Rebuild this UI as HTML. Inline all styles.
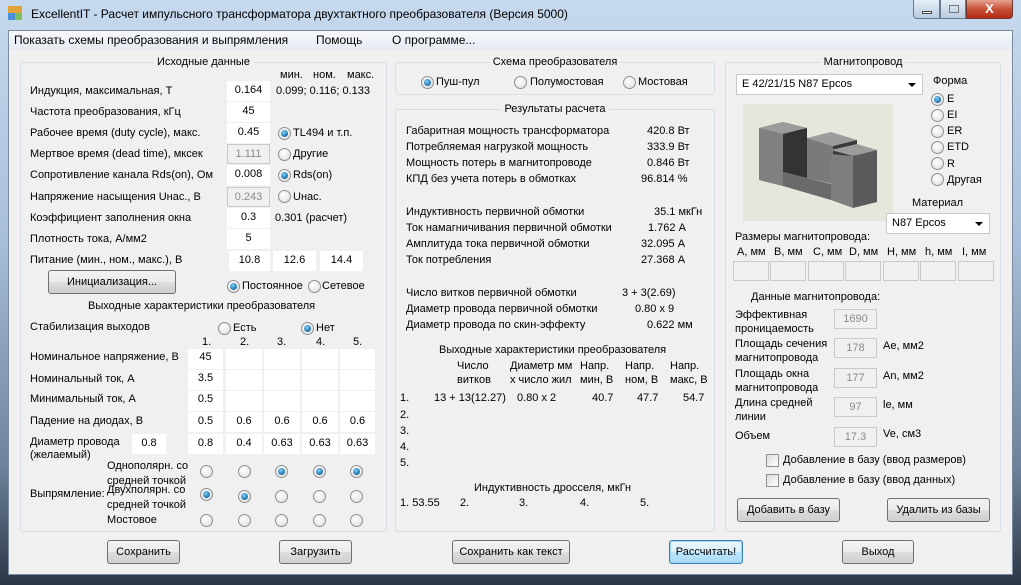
<!DOCTYPE html>
<html><head><meta charset="utf-8"><style>
*{margin:0;padding:0;box-sizing:border-box}
body{width:1021px;height:585px;overflow:hidden;position:relative;font-family:"Liberation Sans","DejaVu Sans",sans-serif;font-size:11px;color:#000;background:linear-gradient(180deg,#c6d9ee 0%,#a9c0da 40%,#6d829a 80%,#2b3645 100%)}
.a{position:absolute;white-space:nowrap}
.t{position:absolute;white-space:nowrap;line-height:14px}
.grp{position:absolute;border:1px solid #d5dfe5;border-radius:3px}
.gt{position:absolute;top:-8px;left:0;right:0;text-align:center;line-height:14px}
.gt span{background:#f0f0f0;padding:0 3px}
.in{position:absolute;background:#fff;height:20px;line-height:19px;text-align:center}
.dis{position:absolute;background:#f0f0f0;border:1px solid #c9c9c9;height:20px;line-height:18px;text-align:center;color:#8a8a8a}
.r{position:absolute;width:13px;height:13px;border-radius:50%;border:1px solid #8e8f8f;background:radial-gradient(circle at 40% 35%,#fff,#dcdcdc)}
.r.on::after{content:"";position:absolute;left:2px;top:2px;width:7px;height:7px;border-radius:50%;background:radial-gradient(circle at 40% 35%,#7fd0f5,#1b6fa8 70%,#0b3f6e)}
.b{position:absolute;height:24px;border:1px solid #707070;border-radius:3px;background:linear-gradient(#f2f2f2,#ebebeb 50%,#dddddd 51%,#cfcfcf);text-align:center;line-height:22px}
.cb{position:absolute;width:13px;height:13px;border:1px solid #8e8f8f;background:linear-gradient(135deg,#dcdcdc,#fff)}
.cmb{position:absolute;background:#fff;border:1px solid #c9c9c9;height:21px;line-height:19px;padding-left:5px}
.cmb::after{content:"";position:absolute;right:6px;top:8px;border-left:4px solid transparent;border-right:4px solid transparent;border-top:4px solid #000}
</style></head><body>
<div class="a" style="left:8px;top:6px;width:14px;height:14px;background:#e2a33a"><div style="position:absolute;left:0;bottom:0;width:7px;height:7px;background:#4a90d9"></div><div style="position:absolute;right:0;bottom:0;width:7px;height:7px;background:#7cc060"></div></div>
<div class="t" style="left:31px;top:7px;font-size:12px">ExcellentIT - Расчет импульсного трансформатора двухтактного преобразователя (Версия 5000)</div>
<div class="a" style="left:913px;top:0;width:27px;height:19px;border:1px solid #6a7a8c;border-top:none;border-radius:0 0 0 4px;background:linear-gradient(#e6eef7,#b9cbe0)"><div style="position:absolute;left:8px;top:11px;width:10px;height:3px;background:#fff;border:1px solid #444"></div></div>
<div class="a" style="left:940px;top:0;width:26px;height:19px;border:1px solid #6a7a8c;border-top:none;background:linear-gradient(#e6eef7,#b9cbe0)"><div style="position:absolute;left:8px;top:5px;width:10px;height:8px;border:1px solid #777"></div></div>
<div class="a" style="left:966px;top:0;width:47px;height:19px;border:1px solid #6a3a30;border-top:none;border-radius:0 0 4px 0;background:linear-gradient(#e8a493,#c75036 50%,#b52d14);color:#fff;font-weight:bold;text-align:center;line-height:17px;font-size:13px">X</div>
<div class="a" style="left:8px;top:30px;width:1005px;height:545px;background:#f0f0f0;border:1px solid #7a8ba0"></div>
<div class="a" style="left:9px;top:31px;width:1003px;height:19px;background:linear-gradient(#f6f8fb,#e5ebf3)"></div>
<div class="t" style="left:14px;top:33px;font-size:12px">Показать схемы преобразования и выпрямления</div>
<div class="t" style="left:316px;top:33px;font-size:12px">Помощь</div>
<div class="t" style="left:392px;top:33px;font-size:12px">О программе...</div>

<div class="grp" style="left:20px;top:62px;width:367px;height:470px"><div class="gt"><span>Исходные данные</span></div></div>
<div class="t" style="left:280px;top:68px">мин.</div><div class="t" style="left:313px;top:68px">ном.</div><div class="t" style="left:347px;top:68px">макс.</div>
<div class="t" style="left:30px;top:84px">Индукция, максимальная, Т</div>
<div class="t" style="left:30px;top:105px">Частота преобразования, кГц</div>
<div class="t" style="left:30px;top:126px">Рабочее время (duty cycle), макс.</div>
<div class="t" style="left:30px;top:147px">Мертвое время (dead time), мксек</div>
<div class="t" style="left:30px;top:168px">Сопротивление канала Rds(on), Ом</div>
<div class="t" style="left:30px;top:190px">Напряжение насыщения Uнас., В</div>
<div class="t" style="left:30px;top:211px">Коэффициент заполнения окна</div>
<div class="t" style="left:30px;top:232px">Плотность тока, А/мм2</div>
<div class="t" style="left:30px;top:253px">Питание (мин., ном., макс.), В</div>
<div class="in" style="left:227px;top:81px;width:43px">0.164</div>
<div class="in" style="left:227px;top:102px;width:43px">45</div>
<div class="in" style="left:227px;top:123px;width:43px">0.45</div>
<div class="dis" style="left:227px;top:144px;width:43px">1.111</div>
<div class="in" style="left:227px;top:165px;width:43px">0.008</div>
<div class="dis" style="left:227px;top:187px;width:43px">0.243</div>
<div class="in" style="left:227px;top:208px;width:43px">0.3</div>
<div class="in" style="left:227px;top:229px;width:43px">5</div>
<div class="in" style="left:229px;top:251px;width:41px">10.8</div>
<div class="in" style="left:273px;top:251px;width:43px">12.6</div>
<div class="in" style="left:320px;top:251px;width:43px">14.4</div>
<div class="t" style="left:276px;top:84px">0.099; 0.116; 0.133</div>
<div class="r on" style="left:278px;top:127px"></div><div class="t" style="left:293px;top:126px">TL494 и т.п.</div>
<div class="r" style="left:278px;top:148px"></div><div class="t" style="left:293px;top:147px">Другие</div>
<div class="r on" style="left:278px;top:169px"></div><div class="t" style="left:293px;top:168px">Rds(on)</div>
<div class="r" style="left:278px;top:190px"></div><div class="t" style="left:293px;top:190px">Uнас.</div>
<div class="t" style="left:275px;top:211px">0.301 (расчет)</div>
<div class="b" style="left:48px;top:270px;width:128px">Инициализация...</div>
<div class="r on" style="left:227px;top:280px"></div><div class="t" style="left:242px;top:279px">Постоянное</div>
<div class="r" style="left:308px;top:280px"></div><div class="t" style="left:322px;top:279px">Сетевое</div>
<div class="t" style="left:88px;top:299px">Выходные характеристики преобразователя</div>
<div class="t" style="left:30px;top:320px">Стабилизация выходов</div>
<div class="r" style="left:218px;top:322px"></div><div class="t" style="left:233px;top:321px">Есть</div>
<div class="r on" style="left:301px;top:322px"></div><div class="t" style="left:316px;top:321px">Нет</div>
<div class="t" style="left:202px;top:335px">1.</div><div class="t" style="left:240px;top:335px">2.</div><div class="t" style="left:277px;top:335px">3.</div><div class="t" style="left:316px;top:335px">4.</div><div class="t" style="left:353px;top:335px">5.</div>
<div class="t" style="left:30px;top:350px">Номинальное напряжение, В</div>
<div class="t" style="left:30px;top:372px">Номинальный ток, А</div>
<div class="t" style="left:30px;top:392px">Минимальный ток, А</div>
<div class="t" style="left:30px;top:414px">Падение на диодах, В</div>
<div class="t" style="left:30px;top:436px;line-height:13px">Диаметр провода<br>(желаемый)</div>
<div class="in" style="left:132px;top:434px;width:34px">0.8</div>
<div class="in" style="left:188px;top:349px;width:35px;line-height:16px">45</div><div class="in" style="left:226px;top:349px;width:36px"></div><div class="in" style="left:264px;top:349px;width:36px"></div><div class="in" style="left:302px;top:349px;width:36px"></div><div class="in" style="left:340px;top:349px;width:35px"></div>
<div class="in" style="left:188px;top:370px;width:35px;line-height:16px">3.5</div><div class="in" style="left:226px;top:370px;width:36px"></div><div class="in" style="left:264px;top:370px;width:36px"></div><div class="in" style="left:302px;top:370px;width:36px"></div><div class="in" style="left:340px;top:370px;width:35px"></div>
<div class="in" style="left:188px;top:391px;width:35px;line-height:16px">0.5</div><div class="in" style="left:226px;top:391px;width:36px"></div><div class="in" style="left:264px;top:391px;width:36px"></div><div class="in" style="left:302px;top:391px;width:36px"></div><div class="in" style="left:340px;top:391px;width:35px"></div>
<div class="in" style="left:188px;top:412px;width:35px">0.5</div><div class="in" style="left:226px;top:412px;width:36px">0.6</div><div class="in" style="left:264px;top:412px;width:36px">0.6</div><div class="in" style="left:302px;top:412px;width:36px">0.6</div><div class="in" style="left:340px;top:412px;width:35px">0.6</div>
<div class="in" style="left:188px;top:434px;width:35px">0.8</div><div class="in" style="left:226px;top:434px;width:36px">0.4</div><div class="in" style="left:264px;top:434px;width:36px">0.63</div><div class="in" style="left:302px;top:434px;width:36px">0.63</div><div class="in" style="left:340px;top:434px;width:35px">0.63</div>
<div class="t" style="left:107px;top:459px;line-height:15px">Однополярн. со<br>средней точкой</div>
<div class="t" style="left:107px;top:483px;line-height:15px">Двухполярн. со<br>средней точкой</div>
<div class="t" style="left:107px;top:513px">Мостовое</div>
<div class="t" style="left:30px;top:487px">Выпрямление:</div>
<div class="r" style="left:200px;top:465px"></div><div class="r" style="left:238px;top:465px"></div><div class="r on" style="left:275px;top:465px"></div><div class="r on" style="left:313px;top:465px"></div><div class="r on" style="left:350px;top:465px"></div>
<div class="r on" style="left:200px;top:488px"></div><div class="r on" style="left:238px;top:490px"></div><div class="r" style="left:275px;top:490px"></div><div class="r" style="left:313px;top:490px"></div><div class="r" style="left:350px;top:490px"></div>
<div class="r" style="left:200px;top:514px"></div><div class="r" style="left:238px;top:514px"></div><div class="r" style="left:275px;top:514px"></div><div class="r" style="left:313px;top:514px"></div><div class="r" style="left:350px;top:514px"></div>

<div class="grp" style="left:395px;top:62px;width:320px;height:33px"><div class="gt"><span>Схема преобразователя</span></div></div>
<div class="r on" style="left:421px;top:76px"></div><div class="t" style="left:436px;top:75px">Пуш-пул</div>
<div class="r" style="left:514px;top:76px"></div><div class="t" style="left:530px;top:75px">Полумостовая</div>
<div class="r" style="left:623px;top:76px"></div><div class="t" style="left:638px;top:75px">Мостовая</div>
<div class="grp" style="left:395px;top:109px;width:320px;height:423px"><div class="gt"><span>Результаты расчета</span></div></div>
<div class="t" style="left:406px;top:124px">Габаритная мощность трансформатора</div><div class="t" style="left:647px;top:124px">420.8 Вт</div>
<div class="t" style="left:406px;top:140px">Потребляемая нагрузкой мощность</div><div class="t" style="left:647px;top:140px">333.9 Вт</div>
<div class="t" style="left:406px;top:156px">Мощность потерь в магнитопроводе</div><div class="t" style="left:647px;top:156px">0.846 Вт</div>
<div class="t" style="left:406px;top:172px">КПД без учета потерь в обмотках</div><div class="t" style="left:641px;top:172px">96.814 %</div>
<div class="t" style="left:406px;top:205px">Индуктивность первичной обмотки</div><div class="t" style="left:654px;top:205px">35.1 мкГн</div>
<div class="t" style="left:406px;top:221px">Ток намагничивания первичной обмотки</div><div class="t" style="left:648px;top:221px">1.762 А</div>
<div class="t" style="left:406px;top:237px">Амплитуда тока первичной обмотки</div><div class="t" style="left:641px;top:237px">32.095 А</div>
<div class="t" style="left:406px;top:253px">Ток потребления</div><div class="t" style="left:641px;top:253px">27.368 А</div>
<div class="t" style="left:406px;top:286px">Число витков первичной обмотки</div><div class="t" style="left:622px;top:286px">3 + 3(2.69)</div>
<div class="t" style="left:406px;top:302px">Диаметр провода первичной обмотки</div><div class="t" style="left:635px;top:302px">0.80 x 9</div>
<div class="t" style="left:406px;top:318px">Диаметр провода по скин-эффекту</div><div class="t" style="left:647px;top:318px">0.622 мм</div>
<div class="t" style="left:439px;top:343px">Выходные характеристики преобразователя</div>
<div class="t" style="left:457px;top:359px;line-height:14px">Число<br>витков</div>
<div class="t" style="left:510px;top:359px;line-height:14px">Диаметр мм<br>х число жил</div>
<div class="t" style="left:580px;top:359px;line-height:14px">Напр.<br>мин, В</div>
<div class="t" style="left:625px;top:359px;line-height:14px">Напр.<br>ном, В</div>
<div class="t" style="left:670px;top:359px;line-height:14px">Напр.<br>макс, В</div>
<div class="t" style="left:400px;top:391px">1.</div><div class="t" style="left:434px;top:391px">13 + 13(12.27)</div><div class="t" style="left:517px;top:391px">0.80 x 2</div><div class="t" style="left:592px;top:391px">40.7</div><div class="t" style="left:637px;top:391px">47.7</div><div class="t" style="left:683px;top:391px">54.7</div>
<div class="t" style="left:400px;top:408px">2.</div><div class="t" style="left:400px;top:424px">3.</div><div class="t" style="left:400px;top:440px">4.</div><div class="t" style="left:400px;top:456px">5.</div>
<div class="t" style="left:474px;top:481px">Индуктивность дросселя, мкГн</div>
<div class="t" style="left:400px;top:496px">1. 53.55</div><div class="t" style="left:460px;top:496px">2.</div><div class="t" style="left:519px;top:496px">3.</div><div class="t" style="left:580px;top:496px">4.</div><div class="t" style="left:640px;top:496px">5.</div>

<div class="grp" style="left:725px;top:62px;width:276px;height:470px"><div class="gt"><span>Магнитопровод</span></div></div>
<div class="cmb" style="left:736px;top:74px;width:187px">E 42/21/15 N87 Epcos</div>
<div class="t" style="left:933px;top:74px">Форма</div>
<div class="r on" style="left:931px;top:93px"></div><div class="t" style="left:947px;top:92px">E</div>
<div class="r" style="left:931px;top:109px"></div><div class="t" style="left:947px;top:108px">EI</div>
<div class="r" style="left:931px;top:125px"></div><div class="t" style="left:947px;top:124px">ER</div>
<div class="r" style="left:931px;top:141px"></div><div class="t" style="left:947px;top:140px">ETD</div>
<div class="r" style="left:931px;top:157px"></div><div class="t" style="left:947px;top:157px">R</div>
<div class="r" style="left:931px;top:173px"></div><div class="t" style="left:947px;top:173px">Другая</div>
<svg class="a" style="left:743px;top:104px" width="150" height="117" viewBox="0 0 150 117">
<rect width="150" height="117" fill="#e6e6dc"/>
<polygon points="16,24 40,18 64,24 64,74 40,68 40,82 16,76" fill="#6e6e6e"/>
<polygon points="16,24 40,18 64,24 40,30" fill="#9c9c9a"/>
<polygon points="40,30 64,24 64,74 40,68" fill="#333"/>
<polygon points="64,34 88,28 114,36 90,42" fill="#9c9c9a"/>
<polygon points="64,34 90,42 90,80 64,74" fill="#7a7a7a"/>
<polygon points="90,42 114,36 114,80 90,80" fill="#3a3a3a"/>
<polygon points="88,46 114,40 134,46 110,52" fill="#9c9c9a"/>
<polygon points="110,52 134,46 134,98 110,104" fill="#5a5a5a"/>
<polygon points="88,50 110,52 110,104 88,96" fill="#7e7e7e"/>
<polygon points="40,68 88,80 88,96 40,82" fill="#6a6a6a"/>
<polygon points="16,24 40,30 40,82 16,76" fill="#808080"/>
</svg>
<div class="t" style="left:912px;top:196px">Материал</div>
<div class="cmb" style="left:886px;top:213px;width:104px">N87 Epcos</div>
<div class="t" style="left:735px;top:230px">Размеры магнитопровода:</div>
<div class="t" style="left:737px;top:245px">A, мм</div><div class="t" style="left:774px;top:245px">B, мм</div><div class="t" style="left:813px;top:245px">C, мм</div><div class="t" style="left:849px;top:245px">D, мм</div><div class="t" style="left:887px;top:245px">H, мм</div><div class="t" style="left:925px;top:245px">h, мм</div><div class="t" style="left:962px;top:245px">I, мм</div>
<div class="dis" style="left:733px;top:261px;width:36px"></div><div class="dis" style="left:770px;top:261px;width:36px"></div><div class="dis" style="left:808px;top:261px;width:36px"></div><div class="dis" style="left:845px;top:261px;width:36px"></div><div class="dis" style="left:883px;top:261px;width:36px"></div><div class="dis" style="left:920px;top:261px;width:36px"></div><div class="dis" style="left:958px;top:261px;width:36px"></div>
<div class="t" style="left:751px;top:290px">Данные магнитопровода:</div>
<div class="t" style="left:735px;top:308px;line-height:14px">Эффективная<br>проницаемость</div><div class="dis" style="left:834px;top:309px;width:43px">1690</div>
<div class="t" style="left:735px;top:337px;line-height:14px">Площадь сечения<br>магнитопровода</div><div class="dis" style="left:834px;top:338px;width:43px">178</div><div class="t" style="left:883px;top:339px">Ae, мм2</div>
<div class="t" style="left:735px;top:367px;line-height:14px">Площадь окна<br>магнитопровода</div><div class="dis" style="left:834px;top:368px;width:43px">177</div><div class="t" style="left:883px;top:369px">An, мм2</div>
<div class="t" style="left:735px;top:396px;line-height:14px">Длина средней<br>линии</div><div class="dis" style="left:834px;top:397px;width:43px">97</div><div class="t" style="left:883px;top:398px">le, мм</div>
<div class="t" style="left:735px;top:429px">Объем</div><div class="dis" style="left:834px;top:427px;width:43px">17.3</div><div class="t" style="left:883px;top:427px">Ve, см3</div>
<div class="cb" style="left:766px;top:454px"></div><div class="t" style="left:783px;top:453px">Добавление в базу (ввод размеров)</div>
<div class="cb" style="left:766px;top:474px"></div><div class="t" style="left:783px;top:473px">Добавление в базу (ввод данных)</div>
<div class="b" style="left:737px;top:498px;width:103px">Добавить в базу</div>
<div class="b" style="left:887px;top:498px;width:103px">Удалить из базы</div>

<div class="b" style="left:107px;top:540px;width:73px">Сохранить</div>
<div class="b" style="left:279px;top:540px;width:73px">Загрузить</div>
<div class="b" style="left:452px;top:540px;width:118px">Сохранить как текст</div>
<div class="b" style="left:669px;top:540px;width:74px;border-color:#3c7fb1;background:linear-gradient(#eaf6fd,#d9f0fc 50%,#bee6fd 51%,#a7d9f5);box-shadow:0 0 0 1px #9fd5f5 inset">Рассчитать!</div>
<div class="b" style="left:842px;top:540px;width:72px">Выход</div>
</body></html>
